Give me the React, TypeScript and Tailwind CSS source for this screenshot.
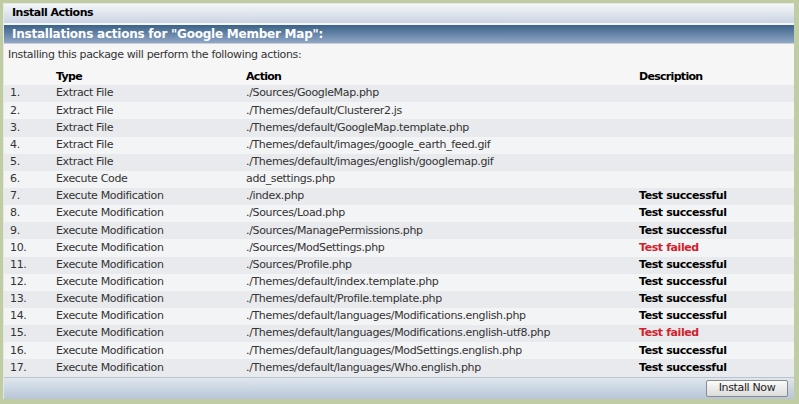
import React from "react";

type Row = { type: string; action: string; desc?: string; failed?: boolean };

const rows: Row[] = [
  { type: "Extract File", action: "./Sources/GoogleMap.php" },
  { type: "Extract File", action: "./Themes/default/Clusterer2.js" },
  { type: "Extract File", action: "./Themes/default/GoogleMap.template.php" },
  { type: "Extract File", action: "./Themes/default/images/google_earth_feed.gif" },
  { type: "Extract File", action: "./Themes/default/images/english/googlemap.gif" },
  { type: "Execute Code", action: "add_settings.php" },
  { type: "Execute Modification", action: "./index.php", desc: "Test successful" },
  { type: "Execute Modification", action: "./Sources/Load.php", desc: "Test successful" },
  { type: "Execute Modification", action: "./Sources/ManagePermissions.php", desc: "Test successful" },
  { type: "Execute Modification", action: "./Sources/ModSettings.php", desc: "Test failed", failed: true },
  { type: "Execute Modification", action: "./Sources/Profile.php", desc: "Test successful" },
  { type: "Execute Modification", action: "./Themes/default/index.template.php", desc: "Test successful" },
  { type: "Execute Modification", action: "./Themes/default/Profile.template.php", desc: "Test successful" },
  { type: "Execute Modification", action: "./Themes/default/languages/Modifications.english.php", desc: "Test successful" },
  { type: "Execute Modification", action: "./Themes/default/languages/Modifications.english-utf8.php", desc: "Test failed", failed: true },
  { type: "Execute Modification", action: "./Themes/default/languages/ModSettings.english.php", desc: "Test successful" },
  { type: "Execute Modification", action: "./Themes/default/languages/Who.english.php", desc: "Test successful" },
];

export default function App() {
  return (
    <div
      className="w-[799px] h-[404px] bg-[#bfcca4] pt-[3px] pl-[3px] pr-[5px] pb-[5px] overflow-hidden"
      style={{ fontFamily: "Verdana, 'DejaVu Sans', sans-serif" }}
    >
      <div className="h-full bg-[#f6f6f6] border-l border-t border-[#e4e8e0] flex flex-col text-[11px] tracking-[-0.35px] text-[#333]">
        <div className="h-[19px] flex items-center px-[8px] font-bold text-[11px] tracking-[-0.5px] text-black bg-gradient-to-b from-[#f4f6f9] to-[#c9d4e2]">
          Install Actions
        </div>
        <div className="h-[20px] mt-[2px] flex items-center px-[8px] font-bold text-[12px] tracking-[-0.23px] text-white bg-gradient-to-b from-[#3a6288] to-[#91a7c6] border-b border-[#c7d1dc]">
          Installations actions for "Google Member Map":
        </div>
        <div className="h-[17px] mt-[3px] flex items-center px-[4px]">
          Installing this package will perform the following actions:
        </div>
        <div className="flex flex-col mt-[5px]">
          <div className="h-[16.5px] flex items-center font-bold text-black tracking-[-0.7px]">
            <div className="w-[52px]" />
            <div className="w-[190px]">Type</div>
            <div className="w-[393px]">Action</div>
            <div>Description</div>
          </div>
          {rows.map((r, i) => (
            <div
              key={i}
              className={`h-[17.15px] flex items-center ${i % 2 === 0 ? "bg-[#e8eaed]" : "bg-[#f3f4f5]"}`}
            >
              <div className="w-[52px] pl-[6px]">{i + 1}.</div>
              <div className="w-[190px]">{r.type}</div>
              <div className="w-[393px]">{r.action}</div>
              <div className={`font-bold tracking-[-0.4px] ${r.failed ? "text-[#d0222c]" : "text-black"}`}>{r.desc ?? ""}</div>
            </div>
          ))}
        </div>
        <div className="flex-1" />
        <div className="h-[23px] flex items-center justify-end pr-[6px] bg-gradient-to-b from-[#dfe6ee] to-[#b8c6d8] border-t border-[#b9c4d2]">
          <button className="h-[17px] w-[82px] text-[11px] tracking-[-0.35px] text-[#222] bg-gradient-to-b from-[#fbfbfb] to-[#dcdcdc] border border-[#8a8a8a] rounded-[2px] flex items-center justify-center">
            Install Now
          </button>
        </div>
      </div>
    </div>
  );
}
